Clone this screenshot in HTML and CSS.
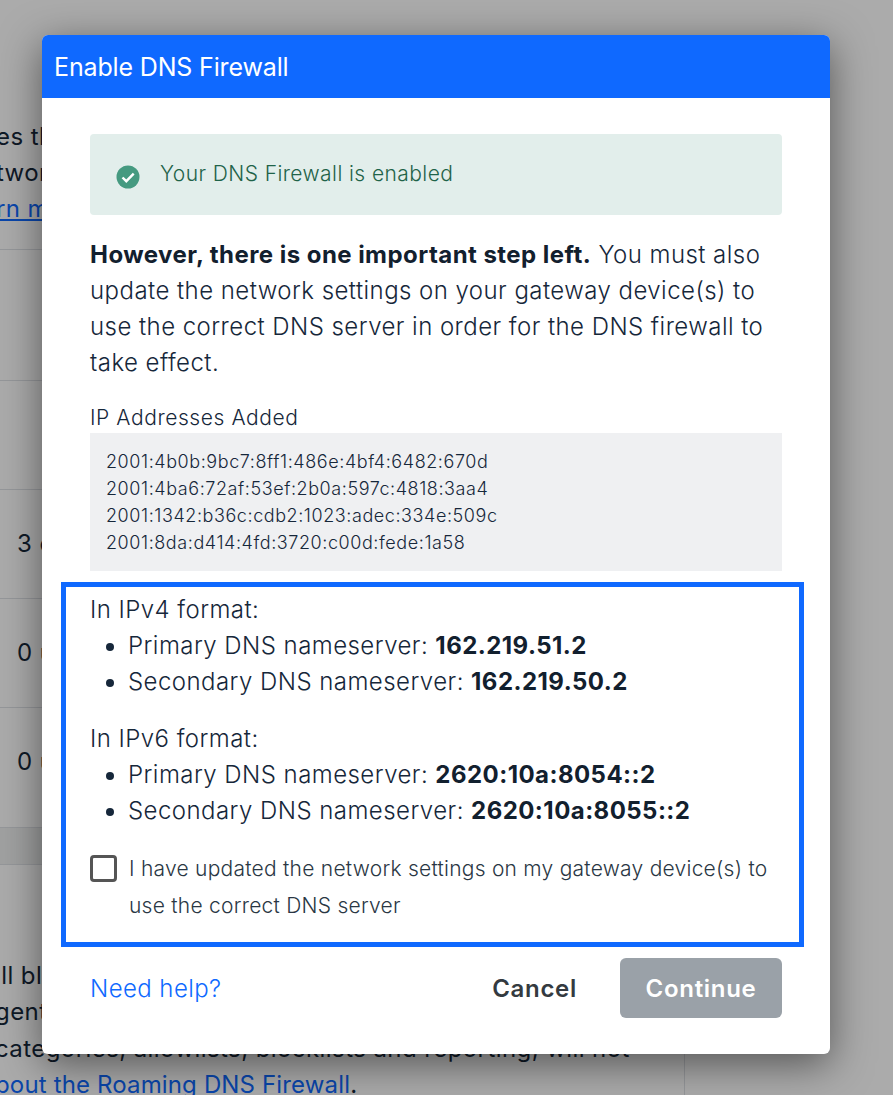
FILE: index.html
```html
<!DOCTYPE html>
<html lang="en">
<head>
    <meta charset="UTF-8">
    <meta name="viewport" content="width=device-width, initial-scale=1.0">
    <title>Enable DNS Firewall</title>
    <link rel="stylesheet" href="styles.css">
</head>
<body>
    <!-- Halaman di belakang modal -->
    <div class="page">
        <div class="card card-top">
            <div class="intro">
                <p>es the</p>
                <p>twork</p>
                <p><a href="#">rn more</a></p>
            </div>
            <div class="row row-tall"></div>
            <div class="row"></div>
            <div class="row">3 c</div>
            <div class="row">0 u</div>
            <div class="row">0 u</div>
        </div>
        <div class="card card-bottom">
            <p>ill block</p>
            <p>gent</p>
            <p>categories, allowlists, blocklists and reporting, will not</p>
            <p><a href="#">bout the Roaming DNS Firewall</a>.</p>
        </div>
    </div>
    <div class="overlay"></div>

    <div class="modal">
        <div class="modal-header">Enable DNS Firewall</div>
        <div class="modal-body">
            <div class="alert">
                <svg class="alert-icon" viewBox="0 0 24 24" width="24" height="24">
                    <circle cx="12" cy="12" r="11.5" fill="#459a80"/>
                    <path d="M6.5 12.5l3.8 3.7 7.4-7.6" fill="none" stroke="#fff" stroke-width="2.4"/>
                </svg>
                <span>Your DNS Firewall is enabled</span>
            </div>
            <p class="lead"><strong>However, there is one important step left.</strong> You must also update the network settings on your gateway device(s) to use the correct DNS server in order for the DNS firewall to take effect.</p>
            <div class="ip-label">IP Addresses Added</div>
            <div class="ip-list">
                <div>2001:4b0b:9bc7:8ff1:486e:4bf4:6482:670d</div>
                <div>2001:4ba6:72af:53ef:2b0a:597c:4818:3aa4</div>
                <div>2001:1342:b36c:cdb2:1023:adec:334e:509c</div>
                <div>2001:8da:d414:4fd:3720:c00d:fede:1a58</div>
            </div>
        </div>

        <div class="highlight">
            <div class="format">In IPv4 format:</div>
            <ul>
                <li>Primary DNS nameserver: <strong>162.219.51.2</strong></li>
                <li>Secondary DNS nameserver: <strong>162.219.50.2</strong></li>
            </ul>
            <div class="format">In IPv6 format:</div>
            <ul>
                <li>Primary DNS nameserver: <strong>2620:10a:8054::2</strong></li>
                <li>Secondary DNS nameserver: <strong>2620:10a:8055::2</strong></li>
            </ul>
            <label class="confirm">
                <span class="checkbox"></span>
                <span>I have updated the network settings on my gateway device(s) to use the correct DNS server</span>
            </label>
        </div>

        <div class="modal-footer">
            <a href="#" class="help-link">Need help?</a>
            <div class="actions">
                <button class="btn-cancel">Cancel</button>
                <button class="btn-continue">Continue</button>
            </div>
        </div>
    </div>
</body>
</html>
```

FILE: styles.css
```css
html, body {
    height: 100%;
}
body {
    margin: 0;
    height: 1095px;
    overflow: hidden;
    position: relative;
    font-family: Inter, "Liberation Sans", sans-serif;
    color: #16273a;
    background-color: #fff;
}
p {
    margin: 0;
}
strong {
    font-weight: 700;
    color: #12202e;
}

/* halaman belakang */
.page {
    width: 685px;
    height: 1095px;
    background-color: #eff0f1;
    font-size: 24px;
    letter-spacing: 0.42px;
}
.page a {
    color: #0f69ff;
    text-decoration: underline;
}
.card {
    background-color: #fff;
    white-space: nowrap;
    overflow: hidden;
}
.card-top {
    height: 828px;
    box-sizing: border-box;
    border-bottom: 1px solid #dee2e6;
}
.intro {
    height: 249px;
    box-sizing: border-box;
    padding-top: 119px;
    line-height: 36px;
}
.intro p {
    margin-left: -4px;
}
.row {
    height: 109px;
    line-height: 108px;
    padding-left: 17px;
    box-sizing: border-box;
    border-top: 1px solid #dee2e6;
}
.row-tall {
    height: 131px;
}
.row:last-child {
    height: 120px;
    line-height: 108px;
}
.card-bottom {
    margin-top: 36px;
    height: 231px;
    box-sizing: border-box;
    padding-top: 93px;
    border-top: 1px solid #dee2e6;
    border-right: 1px solid #dee2e6;
    line-height: 36.4px;
}
.card-bottom p {
    margin-left: -5px;
}
.card-bottom a {
    letter-spacing: 0.15px;
}
.overlay {
    position: absolute;
    top: 0;
    left: 0;
    right: 0;
    bottom: 0;
    background-color: rgba(0, 0, 0, 0.33);
}

/* modal */
.modal {
    position: absolute;
    left: 42px;
    top: 35px;
    width: 788px;
    height: 1019px;
    background-color: #fff;
    border-radius: 6px;
    box-shadow: 0 10px 40px rgba(0, 0, 0, 0.5);
    overflow: hidden;
}
.modal-header {
    height: 63px;
    line-height: 64px;
    padding-left: 12px;
    background-color: #0f69ff;
    color: #fff;
    font-size: 25px;
    letter-spacing: -0.15px;
}
.modal-body {
    padding: 36px 48px 0;
}
.alert {
    display: flex;
    align-items: center;
    gap: 20px;
    height: 81px;
    padding-left: 26px;
    box-sizing: border-box;
    background-color: #e2eeeb;
    border-radius: 4px;
    color: #1f6349;
    font-size: 21px;
    font-weight: 300;
    letter-spacing: 0.42px;
}
.alert-icon {
    margin-top: 5px;
}
.alert span {
    margin-top: -2px;
}
.lead {
    margin-top: 22px;
    font-size: 24px;
    font-weight: 300;
    line-height: 36px;
    letter-spacing: 0.45px;
}
.lead strong {
    letter-spacing: 0.45px;
}
.ip-label {
    margin-top: 23px;
    font-size: 21px;
    font-weight: 300;
    line-height: 28px;
    letter-spacing: 0.58px;
}
.ip-list {
    margin-top: 1px;
    padding: 15px 16px;
    height: 138px;
    box-sizing: border-box;
    background-color: #eff0f2;
    font-size: 18px;
    font-weight: 300;
    line-height: 27px;
    letter-spacing: 0.57px;
}
.highlight {
    margin: 11px 26px 0 19px;
    height: 365px;
    box-sizing: border-box;
    border: 5px solid #0f69ff;
    padding: 5px 24px 0;
    font-size: 24px;
    font-weight: 300;
    line-height: 36px;
    letter-spacing: 0.45px;
}
.highlight strong {
    letter-spacing: 0.45px;
}
.highlight ul {
    margin: 0 0 21px;
    padding-left: 38px;
}
.confirm {
    display: flex;
    gap: 12px;
    font-size: 21px;
    line-height: 37px;
    letter-spacing: 0.25px;
    color: #2a3744;
}
.checkbox {
    flex: none;
    width: 27px;
    height: 27px;
    margin-top: 5px;
    box-sizing: border-box;
    border: 3px solid #555;
    border-radius: 4px;
}

/* footer */
.modal-footer {
    display: flex;
    justify-content: space-between;
    align-items: center;
    padding: 11px 48px 0;
}
.help-link {
    font-size: 24px;
    font-weight: 300;
    color: #0f69ff;
    text-decoration: none;
    letter-spacing: 0.42px;
}
.actions {
    display: flex;
    align-items: center;
    gap: 43px;
}
.actions button {
    border: none;
    font-family: inherit;
    font-size: 24px;
    font-weight: 600;
    letter-spacing: 0.7px;
    cursor: pointer;
}
.btn-cancel {
    padding: 0;
    background: none;
    color: #343a40;
}
.btn-continue {
    width: 162px;
    height: 60px;
    background-color: #9aa1a8;
    color: #fff;
    border-radius: 6px;
}
```
